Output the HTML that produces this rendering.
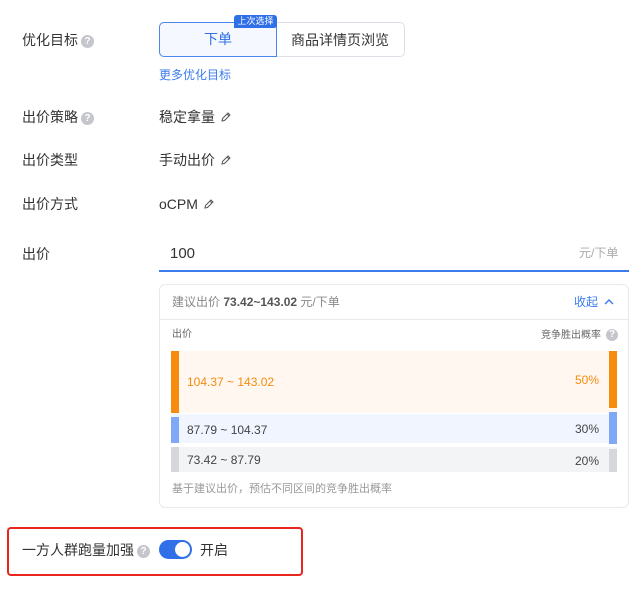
<!DOCTYPE html>
<html><head><meta charset="utf-8"><style>
*{margin:0;padding:0;box-sizing:border-box}
body{width:640px;height:590px;background:#fff;font-family:"Liberation Sans","Noto Sans CJK SC",sans-serif;color:#333;position:relative;overflow:hidden;font-size:14px}
.a{position:absolute;white-space:nowrap;line-height:1}
.lbl{left:22px;font-size:14px;color:#333}
.q{display:inline-block;width:13px;height:13px;border-radius:50%;background:#c4c6cc;color:#fff;font-size:10px;line-height:13px;text-align:center;vertical-align:1px;margin-left:3px;font-weight:bold}
.pen{display:inline-block;margin-left:5px;vertical-align:-1px}
</style></head><body>
<div class="a lbl" style="top:33px">优化目标<span class="q">?</span></div>
<div class="a" style="left:159px;top:22px;width:246px;height:35px;border:1px solid #dcdfe6;border-radius:5px"></div>
<div class="a" style="left:159px;top:22px;width:118px;height:35px;border:1px solid #4a86f0;border-radius:5px 0 0 5px;background:#f5f8ff;color:#2f6fe8;font-size:14px;text-align:center;line-height:33px">下单</div>
<div class="a" style="left:291px;top:33px;font-size:14px;color:#333">商品详情页浏览</div>
<div class="a" style="left:234px;top:15px;width:43px;height:13px;background:#2f6fe8;color:#fff;font-size:9px;line-height:13px;text-align:center;border-radius:3px 3px 3px 0">上次选择</div>
<div class="a" style="left:159px;top:69px;font-size:12px;color:#3b7bec">更多优化目标</div>

<div class="a lbl" style="top:110px">出价策略<span class="q">?</span></div>
<div class="a" style="left:159px;top:110px">稳定拿量<svg class="pen" width="11" height="11" viewBox="0 0 11 11"><path d="M2 9l.5-2.5L8 1l2 2-5.5 5.5zM7 2l2 2" fill="none" stroke="#555" stroke-width="1"/></svg></div>
<div class="a lbl" style="top:153px">出价类型</div>
<div class="a" style="left:159px;top:153px">手动出价<svg class="pen" width="11" height="11" viewBox="0 0 11 11"><path d="M2 9l.5-2.5L8 1l2 2-5.5 5.5zM7 2l2 2" fill="none" stroke="#555" stroke-width="1"/></svg></div>
<div class="a lbl" style="top:197px">出价方式</div>
<div class="a" style="left:159px;top:197px">oCPM<svg class="pen" width="11" height="11" viewBox="0 0 11 11"><path d="M2 9l.5-2.5L8 1l2 2-5.5 5.5zM7 2l2 2" fill="none" stroke="#555" stroke-width="1"/></svg></div>

<div class="a lbl" style="top:247px">出价</div>
<div class="a" style="left:170px;top:246px;font-size:15px;color:#333">100</div>
<div class="a" style="left:579px;top:247px;font-size:12px;color:#aaa">元/下单</div>
<div class="a" style="left:159px;top:270px;width:470px;height:2px;background:#3b7bec"></div>

<div class="a" style="left:159px;top:284px;width:470px;height:224px;border:1px solid #e8e9ec;border-radius:6px"></div>
<div class="a" style="left:160px;top:319px;width:468px;height:1px;background:#e8e9ec"></div>
<div class="a" style="left:172px;top:296px;font-size:12px;color:#888">建议出价 <b style="color:#555">73.42~143.02</b> 元/下单</div>
<div class="a" style="left:574px;top:296px;font-size:12px;color:#3b7bec">收起 <svg width="10" height="8" viewBox="0 0 10 8" style="margin-left:3px"><path d="M1 6l4-4 4 4" fill="none" stroke="#3b7bec" stroke-width="1.4"/></svg></div>
<div class="a" style="left:172px;top:330px;font-size:10px;color:#666">出价</div>
<div class="a" style="left:541px;top:329px;font-size:10px;color:#666">竞争胜出概率<span class="q" style="width:12px;height:12px;line-height:12px;margin-left:5px">?</span></div>

<div class="a" style="left:171px;top:351px;width:446px;height:62px;background:#fff7f0"></div>
<div class="a" style="left:171px;top:351px;width:8px;height:62px;background:#f68b0e"></div>
<div class="a" style="left:609px;top:351px;width:8px;height:57px;background:#f68b0e"></div>
<div class="a" style="left:187px;top:376px;font-size:12px;color:#f68b0e">104.37 ~ 143.02</div>
<div class="a" style="left:575px;top:374px;font-size:12px;color:#f68b0e">50%</div>

<div class="a" style="left:171px;top:414px;width:446px;height:29px;background:#f0f5ff"></div>
<div class="a" style="left:171px;top:417px;width:8px;height:26px;background:#7fa8f8"></div>
<div class="a" style="left:609px;top:412px;width:8px;height:32px;background:#7fa8f8"></div>
<div class="a" style="left:187px;top:424px;font-size:12px;color:#444">87.79 ~ 104.37</div>
<div class="a" style="left:575px;top:423px;font-size:12px;color:#444">30%</div>

<div class="a" style="left:171px;top:447px;width:446px;height:25px;background:#f3f4f6"></div>
<div class="a" style="left:171px;top:447px;width:8px;height:25px;background:#d6d7db"></div>
<div class="a" style="left:609px;top:449px;width:8px;height:23px;background:#d6d7db"></div>
<div class="a" style="left:187px;top:454px;font-size:12px;color:#444">73.42 ~ 87.79</div>
<div class="a" style="left:575px;top:455px;font-size:12px;color:#444">20%</div>

<div class="a" style="left:172px;top:484px;font-size:11px;color:#999">基于建议出价，预估不同区间的竞争胜出概率</div>

<div class="a" style="left:7px;top:527px;width:296px;height:49px;border:2px solid #e8261e;border-radius:4px"></div>
<div class="a lbl" style="top:543px">一方人群跑量加强<span class="q">?</span></div>
<div class="a" style="left:159px;top:540px;width:33px;height:19px;border-radius:10px;background:#2f6fe8"></div>
<div class="a" style="left:175px;top:542px;width:15px;height:15px;border-radius:50%;background:#fff"></div>
<div class="a" style="left:200px;top:543px;font-size:14px;color:#333">开启</div>
</body></html>
